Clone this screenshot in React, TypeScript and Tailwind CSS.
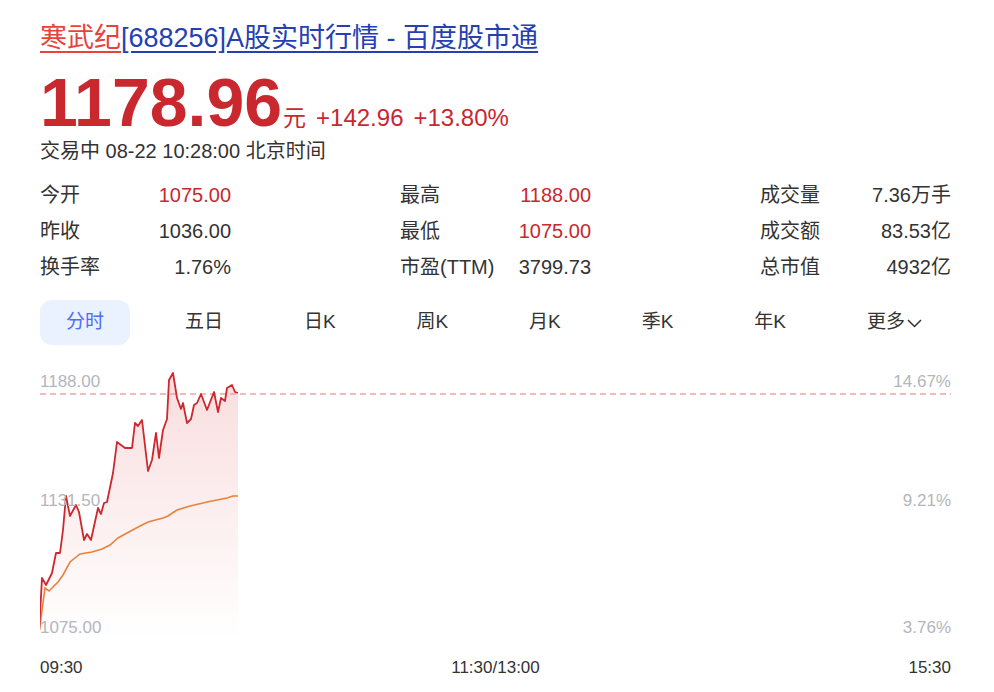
import React from "react";

const FONT = '"Liberation Sans", "Noto Sans CJK SC", sans-serif';

// 分时数据 (页面坐标)
const pricePts: [number, number][] = [
  [39, 633], [42, 578], [46, 585], [52, 573], [56, 553], [60, 553], [63, 530],
  [66, 496], [70, 516], [76, 505], [79, 512], [84, 540], [87, 534], [91, 540],
  [98, 508], [101, 514], [104, 503], [107, 502], [113, 473], [117, 442],
  [125, 448], [132, 448], [135, 423], [138, 426], [142, 420], [148, 471],
  [152, 460], [156, 433], [159, 458], [163, 430], [167, 419], [169, 380],
  [173, 373], [177, 398], [181, 409], [183, 403], [187, 423], [191, 419],
  [194, 405], [197, 403], [201, 394], [207, 410], [214, 392], [218, 412],
  [221, 398], [225, 401], [227, 388], [232, 385], [235, 392], [238, 393],
];

const avgPts: [number, number][] = [
  [39, 633], [45, 588], [49, 591], [58, 582], [63, 575], [70, 562], [80, 554],
  [92, 552], [102, 549], [110, 545], [118, 538], [127, 533], [140, 526],
  [148, 522], [163, 518], [168, 516], [177, 510], [190, 506], [203, 503],
  [207, 502], [217, 500], [227, 498], [233, 496], [238, 496],
];

const toPath = (pts: [number, number][]) =>
  pts.map(([x, y], i) => `${i === 0 ? "M" : "L"}${x} ${y}`).join(" ");

const stats = [
  [
    { label: "今开", value: "1075.00", red: true },
    { label: "昨收", value: "1036.00" },
    { label: "换手率", value: "1.76%" },
  ],
  [
    { label: "最高", value: "1188.00", red: true },
    { label: "最低", value: "1075.00", red: true },
    { label: "市盈(TTM)", value: "3799.73" },
  ],
  [
    { label: "成交量", value: "7.36万手" },
    { label: "成交额", value: "83.53亿" },
    { label: "总市值", value: "4932亿" },
  ],
];

const tabs = ["分时", "五日", "日K", "周K", "月K", "季K", "年K"];

const Chart: React.FC = () => {
  const area = `${toPath(pricePts)} L238 640 L39 640 Z`;
  return (
    <div className="relative h-[280px] w-full text-[17px] leading-[18px] text-[#b3b6bd]">
      <svg
        className="absolute inset-0"
        width="911"
        height="280"
        viewBox="40 365 911 280"
      >
        <defs>
          <linearGradient id="fill" x1="0" y1="0" x2="0" y2="1">
            <stop offset="0%" stopColor="#d9292f" stopOpacity="0.16" />
            <stop offset="100%" stopColor="#d9292f" stopOpacity="0" />
          </linearGradient>
        </defs>
        <path d={area} fill="url(#fill)" />
        <line
          x1="40"
          y1="394"
          x2="951"
          y2="394"
          stroke="#f3a3a3"
          strokeWidth="1.5"
          strokeDasharray="6 4"
        />
        <path d={toPath(avgPts)} fill="none" stroke="#e8823a" strokeWidth="1.6" />
        <path d={toPath(pricePts)} fill="none" stroke="#d0262d" strokeWidth="1.8" strokeLinejoin="round" />
      </svg>
      <span className="absolute left-0 top-[8px]">1188.00</span>
      <span className="absolute left-0 top-[127px]">1131.50</span>
      <span className="absolute left-0 top-[254px]">1075.00</span>
      <span className="absolute right-0 top-[8px]">14.67%</span>
      <span className="absolute right-0 top-[127px]">9.21%</span>
      <span className="absolute right-0 top-[254px]">3.76%</span>
    </div>
  );
};

const App: React.FC = () => {
  return (
    <div
      className="w-[994px] h-[692px] bg-white pl-[40px] pt-[20px] text-[#333]"
      style={{ fontFamily: FONT }}
    >
      <div className="w-[911px]">
        {/* 标题 */}
        <div className="text-[27px] leading-[36px] whitespace-nowrap">
          <a className="text-[#e8433a] underline underline-offset-[4px]">寒武纪</a>
          <a className="text-[#2440b3] underline underline-offset-[4px]">[688256]A股实时行情 - 百度股市通</a>
        </div>

        {/* 价格 */}
        <div className="mt-[14px] flex items-baseline text-[#c8282e] whitespace-nowrap">
          <span className="text-[68px] font-bold leading-[64px]">1178.96</span>
          <span className="text-[23px] ml-[1px]">元</span>
          <span className="text-[24px] ml-[10px]">+142.96</span>
          <span className="text-[24px] ml-[10px]">+13.80%</span>
        </div>
        <div className="mt-[2px] text-[20px] leading-[26px]">交易中 08-22 10:28:00 北京时间</div>

        {/* 数据 */}
        <div className="mt-[13px] flex justify-between">
          {stats.map((col, i) => (
            <div key={i} className="w-[191px]">
              {col.map((s) => (
                <div key={s.label} className="flex justify-between h-[36px] items-center text-[20px]">
                  <span>{s.label}</span>
                  <span className={s.red ? "text-[#c8282e]" : ""}>{s.value}</span>
                </div>
              ))}
            </div>
          ))}
        </div>

        {/* 标签页 */}
        <div className="mt-[15px] flex justify-between items-center text-[19px]">
          {tabs.map((t, i) => (
            <div
              key={t}
              className={
                i === 0
                  ? "h-[45px] px-[26px] flex items-center rounded-[12px] bg-[#eaf1ff] text-[#4e6ef2]"
                  : "h-[45px] px-[26px] flex items-center text-[#333]"
              }
            >
              {t}
            </div>
          ))}
          <div className="h-[45px] pl-[26px] pr-[29px] flex items-center text-[#333]">
            更多
            <svg width="15" height="9" viewBox="0 0 15 9" className="ml-[2px] mt-[2px]">
              <polyline points="1,1 7.5,7.5 14,1" fill="none" stroke="#333" strokeWidth="1.5" />
            </svg>
          </div>
        </div>

        {/* 图表 */}
        <div className="mt-[20px]">
          <Chart />
        </div>
        <div className="mt-[11px] flex justify-between text-[17px] leading-[24px] text-[#333]">
          <span>09:30</span>
          <span>11:30/13:00</span>
          <span>15:30</span>
        </div>
      </div>
    </div>
  );
};

export default App;
